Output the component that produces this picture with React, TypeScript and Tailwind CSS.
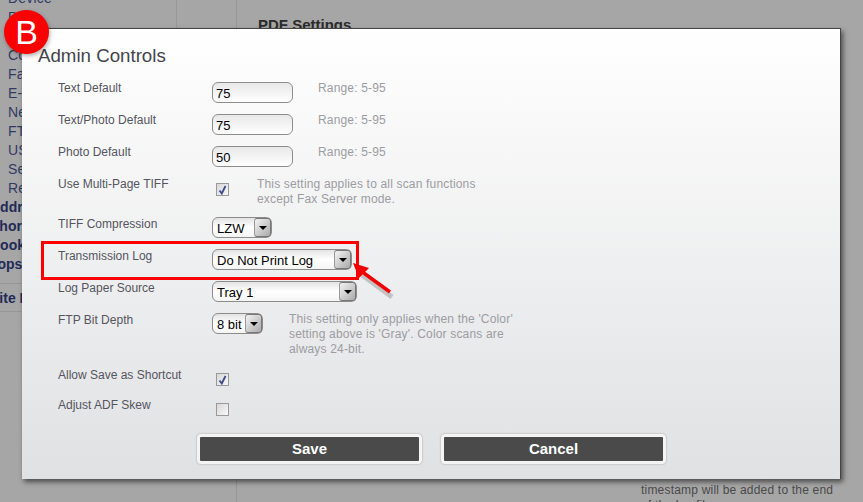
const sideLinks = ["Device", "PDF", "", "Copy", "Fax", "E-mail", "Network", "FTP", "USB", "Security", "Reports"];
const sideBold = ["Address", "Shortcuts", "Book", "Tops"];

function Label({ children, lift }: { children: string; lift?: boolean }) {
  return (
    <div className={`w-[154px] shrink-0 text-[12px] leading-[15px] text-[#555560] ${lift ? "-mt-px" : ""}`}>
      {children}
    </div>
  );
}

function Note({ lines, className }: { lines: string[]; className: string }) {
  return (
    <div className={`-mt-px text-[12px] leading-[15px] tracking-[0.17px] text-[#9c9ca2] ${className}`}>
      {lines.map((line) => (
        <div key={line}>{line}</div>
      ))}
    </div>
  );
}

function TextBox({ value }: { value: string }) {
  return (
    <div className="flex h-[21px] w-[81px] items-center rounded-[6px] border border-[#8c8c8c] bg-gradient-to-b from-[#e8e8e8] to-white pl-[3px] pt-[2px] text-[13px] leading-none text-black">
      {value}
    </div>
  );
}

function Select({ value, width }: { value: string; width: string }) {
  return (
    <div className={`flex h-[21px] items-center justify-between rounded-[6px] border border-[#8c8c8c] bg-gradient-to-b from-[#e4e4e4] via-white to-[#f4f4f4] pl-[4px] text-[13px] leading-none text-black ${width}`}>
      <span className="pt-[2px]">{value}</span>
      <span className="flex h-[19px] w-[17px] items-center justify-center rounded-[3px] border border-[#777] border-l-[#999] bg-gradient-to-br from-[#f4f4f4] to-[#aaaaaa]">
        <span className="h-0 w-0 border-x-[4px] border-t-[4px] border-x-transparent border-t-black" />
      </span>
    </div>
  );
}

function CheckBox({ checked }: { checked?: boolean }) {
  return (
    <div className="mt-[5px] flex h-[13px] w-[13px] items-center justify-center border border-[#999] bg-gradient-to-br from-[#d8d8d8] to-[#f8f8f8] ml-[4px]">
      {checked ? (
        <svg width="9" height="10" viewBox="0 0 9 10" fill="none">
          <path d="M1.5 5.5 L3.8 8.5 L7.5 1" stroke="#3e4a8e" strokeWidth="1.8" />
        </svg>
      ) : null}
    </div>
  );
}

function ActionButton({ children }: { children: string }) {
  return (
    <button
      type="button"
      className="h-[30px] w-[225px] rounded-[4px] border-[3px] border-[#f4f4f4] bg-[#4a4a4a] text-[15px] font-bold text-white shadow-[0_0_2px_#999]"
    >
      {children}
    </button>
  );
}

export default function App() {
  return (
    <div className="relative h-[502px] w-[863px] overflow-hidden bg-[#a6a6a6] font-['Liberation_Sans',Arial,sans-serif]">
      {/* page behind the dialog */}
      <div className="flex h-full">
        <div className="h-[320px] w-[177px] shrink-0 border-r border-[#979797]">
          <div className="-mt-[11px] flex flex-col pl-[8px] text-[14px] leading-[19px] tracking-[0.2px] text-[#323a63]">
            {sideLinks.map((link, i) => (
              <div key={i} className="h-[19px]">{link}</div>
            ))}
          </div>
          <div className="flex flex-col text-[14px] font-bold leading-[19px] text-[#232a58]">
            {sideBold.map((link) => (
              <div key={link} className="-ml-[10px] h-[19px]">{link}</div>
            ))}
          </div>
          <div className="mt-[9px] h-[29px] border-y border-[#979797] pt-[5px] text-[14px] font-bold leading-[19px] text-[#232a58]">
            <div className="-ml-[10px]">Site Map</div>
          </div>
        </div>
        <div className="h-full w-[60px] shrink-0 border-r border-[#979797]" />
        <div className="pl-[21px]">
          <div className="mt-[17px] text-[15px] font-bold leading-[16px] text-[#2b2b2b]">PDF Settings</div>
          <div className="ml-[383px] mt-[448px] whitespace-nowrap text-[12px] leading-[18px] tracking-[0.2px] text-[#4a4a4a]">
            timestamp will be added to the end
          </div>
          <div className="-mt-[3px] ml-[383px] whitespace-nowrap text-[12px] leading-[18px] tracking-[0.2px] text-[#4a4a4a]">of the log file.</div>
        </div>
      </div>

      {/* dialog */}
      <div className="absolute left-[22px] top-[28px] h-[451px] w-[819px] border border-b-0 border-l-0 border-[#444] bg-gradient-to-b from-white to-[#e0e1e3] pl-[36px] shadow-[2px_3px_5px_rgba(0,0,0,0.55)]">
        <h1 className="-ml-[20px] mt-[16px] text-[18.7px] leading-[21px] text-[#44444c]">Admin Controls</h1>

        <div className="mt-[16px] flex items-start">
          <Label lift>Text Default</Label>
          <TextBox value="75" />
          <Note className="ml-[25px]" lines={["Range: 5-95"]} />
        </div>
        <div className="mt-[11px] flex items-start">
          <Label lift>Text/Photo Default</Label>
          <TextBox value="75" />
          <Note className="ml-[25px]" lines={["Range: 5-95"]} />
        </div>
        <div className="mt-[11px] flex items-start">
          <Label lift>Photo Default</Label>
          <TextBox value="50" />
          <Note className="ml-[25px]" lines={["Range: 5-95"]} />
        </div>
        <div className="mt-[11px] flex h-[28px] items-start">
          <Label lift>Use Multi-Page TIFF</Label>
          <CheckBox checked />
          <Note
            className="ml-[28px]"
            lines={["This setting applies to all scan functions", "except Fax Server mode."]}
          />
        </div>
        <div className="mt-[11px] flex items-start">
          <Label>TIFF Compression</Label>
          <Select value="LZW" width="w-[60px]" />
        </div>
        <div className="mt-[11px] flex items-start">
          <Label>Transmission Log</Label>
          <Select value="Do Not Print Log" width="w-[140px]" />
        </div>
        <div className="mt-[11px] flex items-start">
          <Label>Log Paper Source</Label>
          <Select value="Tray 1" width="w-[145px]" />
        </div>
        <div className="mt-[11px] flex h-[44px] items-start">
          <Label>FTP Bit Depth</Label>
          <Select value="8 bit" width="w-[51px]" />
          <Note
            className="ml-[26px]"
            lines={[
              "This setting only applies when the 'Color'",
              "setting above is 'Gray'. Color scans are",
              "always 24-bit.",
            ]}
          />
        </div>
        <div className="mt-[11px] flex h-[19px] items-start">
          <Label>Allow Save as Shortcut</Label>
          <CheckBox checked />
        </div>
        <div className="mt-[11px] flex h-[19px] items-start">
          <Label>Adjust ADF Skew</Label>
          <CheckBox />
        </div>
        <div className="mt-[17px] flex gap-[19px] pl-[139px]">
          <ActionButton>Save</ActionButton>
          <ActionButton>Cancel</ActionButton>
        </div>
      </div>

      {/* annotations */}
      <div className="absolute left-[41px] top-[241px] h-[39px] w-[318px] border-[3.5px] border-[#f00]" />
      <svg className="absolute left-[345px] top-[255px]" width="60" height="50" viewBox="0 0 60 50" fill="none">
        <path d="M16 17 L46 39" stroke="#000" strokeOpacity="0.18" strokeWidth="5" transform="translate(1 3)" />
        <path d="M16 16 L45 37" stroke="#f00000" strokeWidth="3.5" />
        <path d="M8 8 L24 13 L14 23 Z" fill="#f00000" />
      </svg>
      <div className="absolute left-[4px] top-[10px] flex h-[44px] w-[45px] items-center justify-center rounded-full bg-[#fa0000] text-[34px] leading-none text-white shadow-[1px_2px_4px_rgba(0,0,0,0.3)]">
        B
      </div>
    </div>
  );
}
